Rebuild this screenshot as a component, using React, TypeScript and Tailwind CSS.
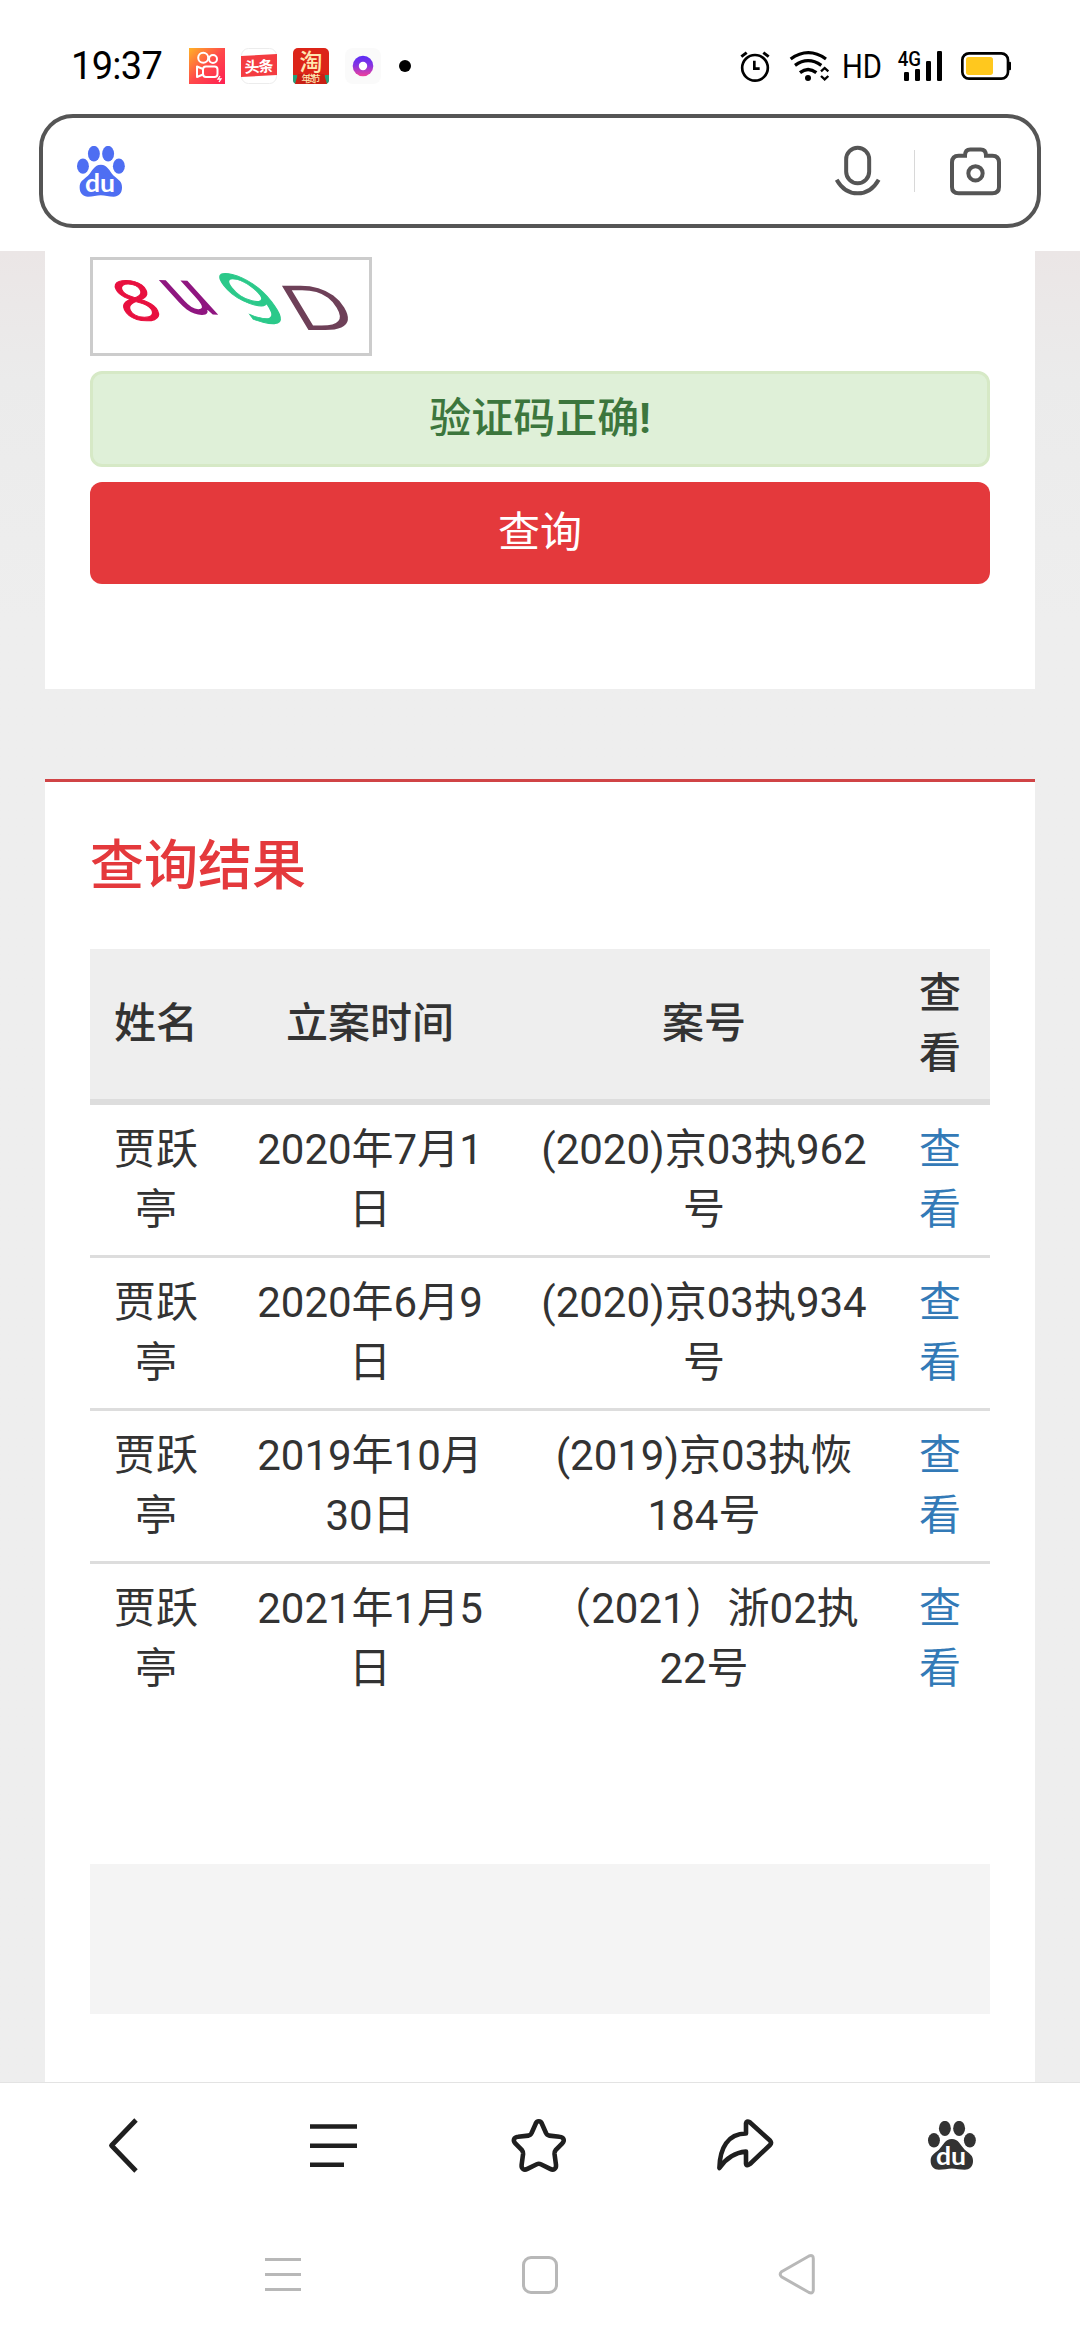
import React from 'react';

interface CaseRecord {
  name: string;
  date: string;
  caseNo: string;
}

const records: CaseRecord[] = [
  { name: '贾跃亭', date: '2020年7月1日', caseNo: '(2020)京03执962号' },
  { name: '贾跃亭', date: '2020年6月9日', caseNo: '(2020)京03执934号' },
  { name: '贾跃亭', date: '2019年10月30日', caseNo: '(2019)京03执恢184号' },
  { name: '贾跃亭', date: '2021年1月5日', caseNo: '（2021）浙02执22号' },
];

const PawLogo: React.FC<{ className?: string }> = ({ className }) => (
  <svg viewBox="111 346 145 152" preserveAspectRatio="none" className={className} fill="currentColor">
    <ellipse cx="162" cy="369" rx="18" ry="23.5" />
    <ellipse cx="205" cy="369" rx="18" ry="23.5" />
    <ellipse cx="129" cy="406" rx="18" ry="22.5" />
    <ellipse cx="237.500" cy="406" rx="18" ry="22.5" />
    <path d="M183 402C203 402 208 420 222 435C238 449 247 452 247 470C247 488 236 497 222 497C208 497 195 493 183 493C171 493 158 497 144 497C130 497 119 488 119 470C119 452 128 449 144 435C158 420 163 402 183 402Z" />
    <text x="135" y="484" fontSize="76" textLength="91" lengthAdjust="spacingAndGlyphs" fill="#fff" className="font-['Lato'] font-bold">du</text>
  </svg>
);

const StatusBar: React.FC = () => (
  <div className="flex h-9 items-center pl-[71px]">
    <span className="w-[118px] whitespace-nowrap text-[38px] leading-9 tracking-[-0.7px] text-black">19:37</span>
    <div className="flex items-center gap-4">
      <svg width="36" height="36" viewBox="0 0 36 36" fill="none" stroke="#fff" strokeWidth="2">
        <defs>
          <linearGradient id="video" x1="0" y1="0" x2="1" y2="1">
            <stop offset="0" stopColor="#ffb326" />
            <stop offset="0.5" stopColor="#ff4a4a" />
            <stop offset="1" stopColor="#ff1f52" />
          </linearGradient>
        </defs>
        <rect width="36" height="36" fill="url(#video)" stroke="none" />
        <circle cx="14.200" cy="9.800" r="5" />
        <circle cx="24" cy="11" r="4" />
        <rect x="14" y="18.500" width="14.500" height="10.500" rx="3" />
        <path d="M14 21L8 18.500V29L14 26.500" strokeLinejoin="round" />
        <path d="M31 28l-2 3h3l-2 3" strokeWidth="1.300" />
      </svg>
      <svg width="36" height="36" viewBox="0 0 36 36">
        <rect x="0.500" y="0.500" width="35" height="35" rx="7" fill="#fff" stroke="#ececec" />
        <path d="M0 8L36 6V27L0 29Z" fill="#f43c41" />
        <text x="3.500" y="24" fontSize="15" textLength="29" fill="#fff" transform="rotate(-3 18 18)" className="font-['Noto_Sans_CJK_SC'] font-bold">头条</text>
      </svg>
      <svg width="36" height="36" viewBox="0 0 36 36">
        <rect width="36" height="36" rx="5" fill="#dc2418" />
        <text x="6.500" y="22" fontSize="23" fill="#ffe6b0" className="font-['Noto_Sans_CJK_SC'] font-medium">淘</text>
        <path d="M0 27h4l3 9H4Q0 36 0 32ZM36 27h-4l-3 9h3q4 0 4-4Z" fill="#23a07a" />
        <path d="M5 26H31L34 36H2Z" fill="#c91f14" />
        <text x="8.500" y="34" fontSize="9" textLength="19" fill="#ffe6b0" className="font-['Noto_Sans_CJK_SC'] font-medium">年货节</text>
      </svg>
      <svg width="36" height="36" viewBox="0 0 36 36">
        <defs>
          <linearGradient id="ring" x1="0" y1="0" x2="0" y2="1">
            <stop offset="0" stopColor="#5a2cf5" />
            <stop offset="0.45" stopColor="#8434e4" />
            <stop offset="1" stopColor="#f0409a" />
          </linearGradient>
        </defs>
        <rect width="36" height="36" rx="8" fill="#fafafa" />
        <circle cx="18" cy="18" r="10.300" fill="url(#ring)" />
        <circle cx="18" cy="18" r="4.200" fill="#fff" />
      </svg>
      <span className="ml-0.5 size-3 rounded-full bg-black" />
    </div>

    <div className="ml-auto flex items-center pr-[67px]">
      <svg width="32" height="36" viewBox="117 54 96 108" fill="none" stroke="#000" strokeWidth="8">
        <circle cx="165" cy="113.500" r="38.500" />
        <path d="M163 92V116H179" />
        <path d="M124 80L140 68M190 68L206 80" strokeWidth="9" />
      </svg>
      <svg width="44" height="36" viewBox="264 54 132 108" fill="none" stroke="#000" strokeWidth="10" className="ml-[17px]">
        <path d="M272 87Q325 49 378 87" />
        <path d="M285 106Q324 78 364 106" />
        <path d="M300 128Q324 109 349 128" />
        <circle cx="324" cy="144" r="9" fill="#000" stroke="none" />
        <path d="M363 124L374 114L385 124M363 138L374 148L385 138" strokeWidth="7" />
      </svg>
      <svg width="40" height="36" viewBox="0 0 40 36" className="ml-2.5">
        <text x="0" y="30" fontSize="33.500" textLength="40" lengthAdjust="spacingAndGlyphs" className="font-['Roboto']">HD</text>
      </svg>
      <svg width="48" height="36" viewBox="591 54 144 108" className="ml-[15px]">
        <text x="593" y="107" fontSize="62" textLength="70" lengthAdjust="spacingAndGlyphs" className="font-['Roboto'] font-medium">4G</text>
        <rect x="612" y="126" width="15" height="27" rx="4" />
        <rect x="645" y="117" width="15" height="36" rx="4" />
        <rect x="678" y="93" width="15" height="60" rx="4" />
        <rect x="711" y="63" width="15" height="90" rx="4" />
      </svg>
      <svg width="54" height="36" viewBox="777 54 162 108" className="ml-3.5">
        <rect x="787" y="70" width="137" height="76" rx="20" fill="none" stroke="#000" strokeWidth="8" />
        <rect x="926" y="95" width="7" height="26" rx="3" />
        <rect x="798" y="81" width="81" height="54" rx="8" fill="#ffc81e" />
      </svg>
    </div>
  </div>
);

const SearchBar: React.FC = () => (
  <div className="mx-[39px] mt-[30px] flex h-[114px] items-center rounded-[34px] border-4 border-[#555] pr-[34px] pl-[34px] text-[#555]">
    <PawLogo className="h-[51px] w-12 text-[#4e6ef2]" />
    <svg width="52" height="54" viewBox="396 342 156 162" fill="none" stroke="currentColor" strokeWidth="12" className="ml-auto">
      <rect x="438.500" y="353.500" width="69" height="106" rx="34.500" />
      <path d="M410 449Q433 490 473 490Q513 490 536 449" />
    </svg>
    <div className="mr-[33px] ml-[30px] h-[42px] w-px bg-[#d8d8d8]" />
    <svg width="55" height="54" viewBox="744 342 165 162" fill="none" stroke="currentColor" strokeWidth="12">
      <path d="M795 377H776Q756 377 756 397V471Q756 489.500 776 489.500H877Q897 489.500 897 471V397Q897 377 877 377H858Q858 358.500 842 358.500H811Q795 358.500 795 377Z" />
      <circle cx="826.500" cy="430" r="21.500" />
    </svg>
  </div>
);

const Captcha: React.FC = () => (
  <div className="h-[99px] w-[282px] border-[3px] border-[#ccc]">
    <svg width="276" height="93" viewBox="93 260 276 93" className="font-['Open_Sans'] font-semibold">
      <text transform="matrix(1.3 0.02 0.5 1.02 126 320)" fontSize="54" className="font-normal" fill="#e8103f" stroke="#e8103f">8</text>
      <text transform="matrix(1 0.02 0.95 1.05 185 314)" fontSize="60" fill="#8f1680">u</text>
      <text transform="matrix(1.55 0.38 0.85 1.12 244 317)" fontSize="60" className="font-normal" fill="#2bc98a" stroke="#2bc98a">9</text>
      <text transform="matrix(1.4 0 0.6 1 300 330)" fontSize="62" className="font-normal" fill="#6e4058">D</text>
    </svg>
  </div>
);

const ResultTable: React.FC = () => (
  <table className="mt-8 w-full table-fixed border-separate border-spacing-0 text-center text-[42px] leading-[60px] text-[#333]">
    <colgroup>
      <col className="w-[132px]" />
      <col className="w-[296px]" />
      <col className="w-[372px]" />
      <col className="w-[100px]" />
    </colgroup>
    <thead>
      <tr className="h-[156px] bg-[#eee] *:border-b-[6px] *:border-[#ddd]">
        <th className="font-medium">姓名</th>
        <th className="font-medium">立案时间</th>
        <th className="font-medium">案号</th>
        <th className="px-6 font-medium">查看</th>
      </tr>
    </thead>
    <tbody>
      {records.map((record) => (
        <tr key={record.caseNo} className="h-[153px] *:border-[#ddd] last:h-[150px] not-last:*:border-b-[3px]">
          <td className="px-6">{record.name}</td>
          <td className="px-6">{record.date}</td>
          <td className="px-5">{record.caseNo}</td>
          <td className="px-6 text-[#337ab7]">查看</td>
        </tr>
      ))}
    </tbody>
  </table>
);

const BrowserToolbar: React.FC = () => (
  <div className="grid h-[126px] grid-cols-5 place-items-center border-t border-[#e3e3e3] px-[25px] text-[#1f1f1f]">
    <svg width="64" height="64" fill="none" stroke="currentColor" strokeWidth="4.800" strokeLinejoin="round">
      <path d="M40 6L15.500 31.500L40 57" />
    </svg>
    <svg width="64" height="64" fill="none" stroke="currentColor" strokeWidth="4.600">
      <path d="M8 12.500H55M8 31.700H55M8 50.800H42" />
    </svg>
    <svg width="64" height="64" fill="none" stroke="currentColor" strokeWidth="4.600" strokeLinejoin="round">
      <path d="M27.700 9.800C28.800 6.400 32.800 6.400 33.900 9.800L38 19Q38.900 21.300 41.300 21.600L51.500 22.800C55.800 23.200 57 26.500 54.300 29.300L47.600 36.200Q46.300 37.800 46.500 39.800L48 51C48.300 55 45.500 56.600 42.200 54.900L32.800 50.200Q30.800 49.200 28.800 50.200L19.400 54.900C16.100 56.600 13.300 55 13.600 51L15.100 39.800Q15.300 37.800 14 36.200L7.300 29.300C4.600 26.500 5.800 23.200 10.100 22.800L20.300 21.600Q22.700 21.300 23.600 19Z" />
    </svg>
    <svg width="64" height="64" fill="none" stroke="currentColor" strokeWidth="4.600" strokeLinejoin="round">
      <path d="M5.400 54C5.800 34 14 19.500 32 19.500V9.500Q32.500 6.500 35.500 8L56 26.500Q58 28.800 56 31L36 50Q32.500 52.500 32 49.500V37.500C21 38.500 11.500 45 5.400 54Z" />
    </svg>
    <PawLogo className="h-[49px] w-12 text-[#333]" />
  </div>
);

const SystemNav: React.FC = () => (
  <div className="grid h-[132px] grid-cols-3 place-items-center px-[154px] text-[#b8b8b8]">
    <svg width="64" height="64" fill="none" stroke="currentColor" strokeWidth="3">
      <path d="M14 17.500H50M14 32.500H50M14 47.500H50" />
    </svg>
    <svg width="64" height="64" fill="none" stroke="currentColor" strokeWidth="3">
      <rect x="15.500" y="15.500" width="33" height="35" rx="7.500" />
    </svg>
    <svg width="64" height="64" fill="none" stroke="currentColor" strokeWidth="3">
      <path d="M16.500 29.800L44 14Q48.300 12.500 48.300 16.500V48Q48.300 52 44 50.500L16.500 34.800Q14 32.300 16.500 29.800Z" />
    </svg>
  </div>
);

const App: React.FC = () => (
  <div className="flex h-[2340px] w-[1080px] flex-col overflow-hidden bg-white font-['Roboto','Noto_Sans_CJK_SC',sans-serif]">
    <header className="h-[251px] shrink-0 pt-12">
      <StatusBar />
      <SearchBar />
    </header>

    <main className="flex h-[1831px] shrink-0 flex-col bg-linear-to-b from-[#ebe6e6] via-[#ebebeb] via-7% to-[#eee] to-20% px-[45px]">
      <section className="h-[438px] shrink-0 bg-white px-[45px] pt-1.5">
        <Captcha />
        <div className="mt-[15px] h-24 rounded-xl border-[3px] border-[#d6e9c6] bg-[#dff0d8] text-center text-[42px] leading-[90px] font-medium text-[#3c763d]">
          验证码正确<span className="font-bold">!</span>
        </div>
        <button className="mt-[15px] block h-[102px] w-full rounded-xl bg-[#e4393c] pb-0.5 text-[42px] text-white">查询</button>
      </section>

      <section className="mt-[90px] grow border-t-[3px] border-[#d04446] bg-white px-[45px] pt-[47px]">
        <h2 className="h-[88px] text-[54px] leading-[76px] font-medium text-[#e4393c]">查询结果</h2>
        <ResultTable />
        <div className="mt-[150px] h-[150px] bg-[#f4f4f4]" />
      </section>
    </main>

    <footer className="shrink-0">
      <BrowserToolbar />
      <SystemNav />
    </footer>
  </div>
);

export default App;
